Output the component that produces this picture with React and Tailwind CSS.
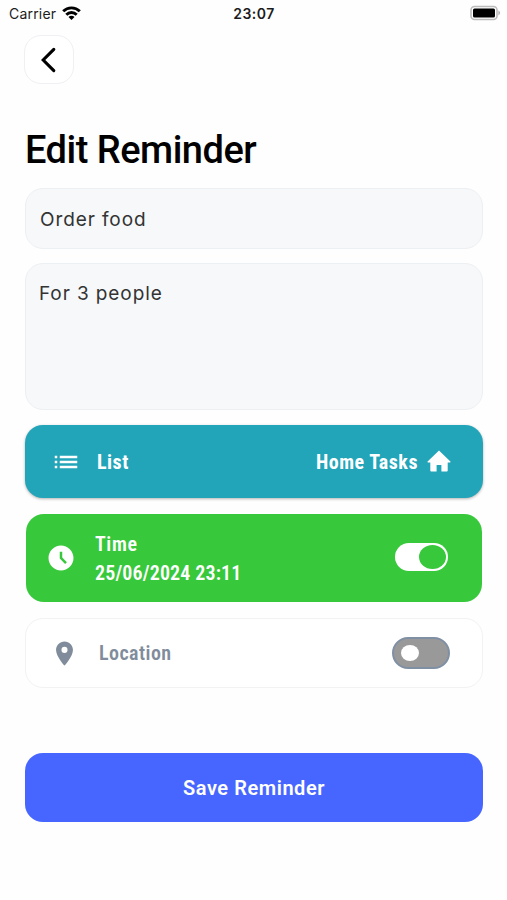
import { useState } from 'react'
import { MdList, MdAccessTimeFilled, MdLocationOn } from 'react-icons/md'

function StatusBar() {
  return (
    <div className="grid h-7 grid-cols-3 items-center pl-[9px] pr-[6px] font-['Inter'] text-[#1c1c1c]">
      <div className="flex items-center gap-[6px]">
        <span className="text-[14px] tracking-[0.2px] leading-7">Carrier</span>
        <svg width="19" height="14" viewBox="0 0 19 14" fill="none" stroke="#000" strokeWidth="2.9" className="-mt-[2px]">
          <path d="M1.2 5.3a11.8 11.8 0 0 1 16.6 0" />
          <path d="M4.3 8.7a7.4 7.4 0 0 1 10.4 0" />
          <path d="M9.5 13.9 6.5 11a4.2 4.2 0 0 1 6 0z" fill="#000" stroke="none" />
        </svg>
      </div>
      <span className="-ml-[2px] text-center text-[14px] font-semibold leading-7 tracking-[0.45px]">23:07</span>
      <svg width="31" height="16" viewBox="0 0 31 16" className="-mt-[2px] justify-self-end">
        <rect x="1" y="1.5" width="26" height="13" rx="3.5" fill="#fff" stroke="#bcbcbc" strokeWidth="1.6" />
        <rect x="3" y="3.5" width="22" height="9" rx="1.5" fill="#000" />
        <path d="M28.3 5.6c2.4 1 2.4 3.8 0 4.8z" fill="#b5b5b5" />
      </svg>
    </div>
  )
}

function HomeIcon() {
  return (
    <svg width="24" height="22" viewBox="0 0 24 22" fill="currentColor" className="-mt-[1px]">
      <path d="M12 .5 23.4 11.6c.4.4.2.8-.4.8h-2.3v8.2c0 .6-.3.9-.9.9h-5.4V15H9.6v6.5H4.2c-.6 0-.9-.3-.9-.9v-8.2H1c-.6 0-.8-.4-.4-.8z" />
    </svg>
  )
}

function App() {
  const [title, setTitle] = useState('Order food')
  const [notes, setNotes] = useState('For 3 people')
  const [timeOn, setTimeOn] = useState(true)
  const [locationOn, setLocationOn] = useState(false)

  return (
    <div className="h-[900px] w-[507px] overflow-hidden bg-[#fefefe] font-['Roboto',sans-serif]">
      <StatusBar />

      <div className="flex flex-col pl-[25px] pr-6">
        <button aria-label="Back" className="-ml-[1px] mt-[7px] flex h-[49px] w-[50px] items-center justify-center rounded-[17px] border border-[#f0f0f4] bg-white">
          <svg width="16" height="26" viewBox="0 0 16 26" fill="none" stroke="#000" strokeWidth="3.1" className="-ml-[3px]">
            <path d="M13.8 2.3 3.2 13l10.6 10.7" strokeLinecap="round" />
          </svg>
        </button>

        <h1 className="mt-[42px] h-[48px] text-[38px] font-medium leading-[48px] tracking-[-0.5px] text-black">Edit Reminder</h1>

        <input
          value={title}
          onChange={(e) => setTitle(e.target.value)}
          className="mt-[14px] h-[61px] rounded-[18px] border border-[#edf0f2] bg-[#f6f8fa] px-[14px] pt-[2px] font-['Inter'] text-[19px] tracking-[0.9px] text-[#333] outline-none"
        />
        <textarea
          value={notes}
          onChange={(e) => setNotes(e.target.value)}
          className="mt-[14px] h-[147px] resize-none rounded-[18px] border border-[#edf0f2] bg-[#f6f8fa] px-[13px] py-[16px] font-['Inter'] text-[19px] leading-7 tracking-[0.9px] text-[#333] outline-none"
        />

        <button className="mt-[15px] flex h-[73px] items-center rounded-[18px] bg-[#22a5b9] pl-[26px] pr-8 text-[20px] font-bold text-white shadow-[0_1px_3px_rgba(0,0,0,0.3)]">
          <MdList size={30} />
          <span className="ml-4 pt-[1px] tracking-[0.5px] [font-stretch:75%]">List</span>
          <span className="ml-auto mr-[9px] pt-[1px] tracking-[0.5px] [font-stretch:75%]">Home Tasks</span>
          <HomeIcon />
        </button>

        <div className="ml-[1px] mr-[1px] mt-[16px] flex h-[88px] items-center rounded-[18px] bg-[#37c83b] pl-5 pr-[34px] text-white">
          <MdAccessTimeFilled size={30} />
          <div className="ml-[19px] pt-[2px] text-[20px] font-semibold leading-[29px] [font-stretch:75%]">
            <div className="tracking-[0.6px]">Time</div>
            <div className="tracking-[0.14px]">25/06/2024 23:11</div>
          </div>
          <button
            aria-label="Time"
            onClick={() => setTimeOn(!timeOn)}
            className={`-mt-[2px] ml-auto flex h-7 w-[53px] items-center rounded-full bg-white px-[2px] ${timeOn ? 'justify-end' : 'justify-start'}`}
          >
            <span className="h-6 w-[27px] rounded-[50%] bg-[#37c83b]" />
          </button>
        </div>

        <div className="mt-[16px] flex h-[70px] items-center rounded-[18px] border border-[#f2f2f3] bg-white pl-6 pr-8 text-[#808c9c]">
          <MdLocationOn size={29} />
          <span className="ml-5 text-[20px] font-semibold tracking-[0.45px] [font-stretch:75%]">Location</span>
          <button
            aria-label="Location"
            onClick={() => setLocationOn(!locationOn)}
            className={`ml-auto flex h-8 w-[58px] items-center rounded-full border-2 border-[#8090a4] bg-[#999] px-[7px] ${locationOn ? 'justify-end' : 'justify-start'}`}
          >
            <span className="h-4 w-[18px] rounded-[50%] bg-white" />
          </button>
        </div>

        <button className="mt-[65px] h-[69px] rounded-[18px] bg-[#4666ff] text-[20px] font-semibold tracking-[0.55px] text-white">
          Save Reminder
        </button>
      </div>
    </div>
  )
}

export default App
